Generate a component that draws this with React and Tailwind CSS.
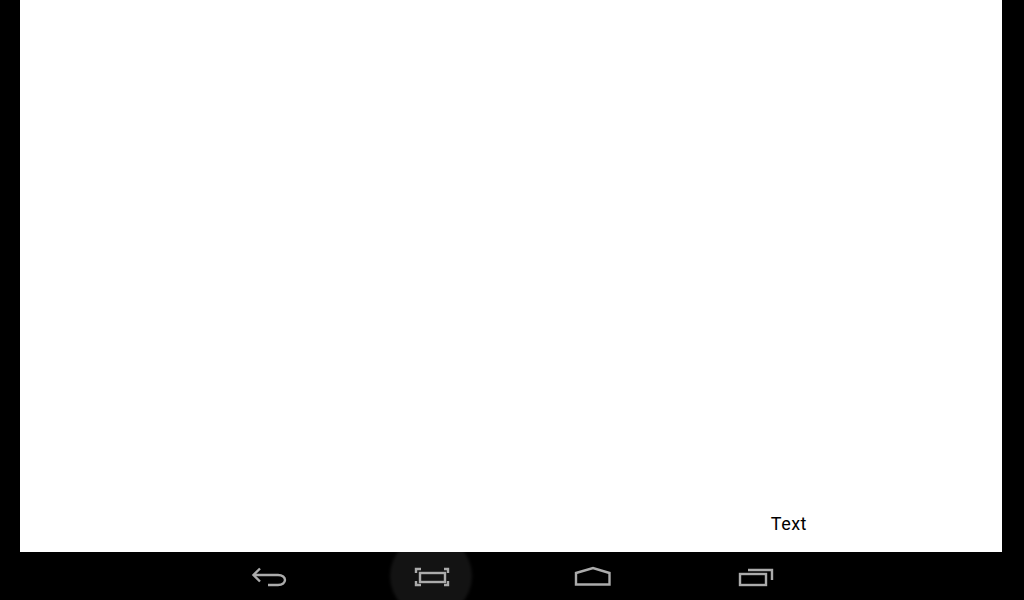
const stroke = '#ababab';

function BackIcon() {
    return (
        <svg viewBox="0 0 162 48" className="w-full h-full" fill="none" stroke={stroke} strokeWidth="2.4">
            <path d="M72 16.5 L65.5 23 L72 29.5" />
            <path d="M66 23 H90 C94.5 23 97 25.5 97 28 C97 30.5 94.5 33 90 33 H80" />
        </svg>
    );
}

function ScreenshotIcon() {
    return (
        <svg viewBox="0 0 162 48" className="relative w-full h-full" fill="none" stroke={stroke} strokeWidth="2.4">
            <rect x="70" y="21" width="25" height="9" />
            <path d="M66 21 V17 H71 M94 17 H98 V21 M66 29 V33 H71 M94 33 H98 V29" />
        </svg>
    );
}

function HomeIcon() {
    return (
        <svg viewBox="0 0 162 48" className="w-full h-full" fill="none" stroke={stroke} strokeWidth="2.4">
            <path d="M64 32.5 V21 L81 16 L97.5 21 V32.5 Z" />
        </svg>
    );
}

function RecentsIcon() {
    return (
        <svg viewBox="0 0 162 48" className="w-full h-full" fill="none" stroke={stroke} strokeWidth="2.4">
            <rect x="66" y="22" width="26" height="11" />
            <path d="M74 18 H98 V28" />
        </svg>
    );
}

export default function App() {
    return (
        <div className="w-[1024px] h-[600px] flex flex-col bg-black overflow-hidden font-['Roboto',sans-serif]">
            <div className="flex-1 ml-5 mr-[22px] bg-white flex items-end justify-end pr-[195px] pb-[18px]">
                <span className="text-black text-lg leading-[21px] tracking-[0.5px]">Text</span>
            </div>
            <div className="h-12 flex justify-center overflow-hidden">
                <div className="w-[162px]"><BackIcon /></div>
                <div className="relative w-[162px]">
                    <div className="absolute left-[40px] top-[-17px] w-[82px] h-[82px] rounded-full bg-[#131313] blur-[1.5px]" />
                    <ScreenshotIcon />
                </div>
                <div className="w-[162px]"><HomeIcon /></div>
                <div className="w-[162px]"><RecentsIcon /></div>
            </div>
        </div>
    );
}
